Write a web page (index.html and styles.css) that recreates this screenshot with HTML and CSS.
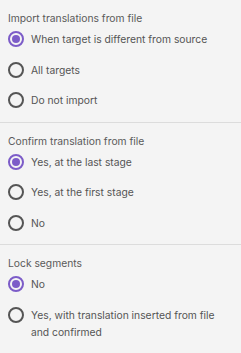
FILE: index.html
```html
<!DOCTYPE html>
<html>
<head>
<meta charset="utf-8">
<link rel="stylesheet" href="styles.css">
</head>
<body>
<div class="panel">
  <section class="group">
    <div class="title">Import translations from file</div>
    <label class="opt"><span class="radio checked"></span><span class="txt">When target is different from source</span></label>
    <label class="opt"><span class="radio"></span><span class="txt">All targets</span></label>
    <label class="opt"><span class="radio"></span><span class="txt">Do not import</span></label>
  </section>
  <section class="group">
    <div class="title">Confirm translation from file</div>
    <label class="opt"><span class="radio checked"></span><span class="txt">Yes, at the last stage</span></label>
    <label class="opt"><span class="radio"></span><span class="txt">Yes, at the first stage</span></label>
    <label class="opt"><span class="radio"></span><span class="txt">No</span></label>
  </section>
  <section class="group last">
    <div class="title">Lock segments</div>
    <label class="opt"><span class="radio checked"></span><span class="txt">No</span></label>
    <label class="opt"><span class="radio"></span><span class="txt">Yes, with translation inserted from file and confirmed</span></label>
  </section>
</div>
</body>
</html>
```
FILE: styles.css
```css
html, body {
  margin: 0;
  padding: 0;
  background: #f4f4f4;
}
body {
  font-family: Inter, "Noto Sans", sans-serif;
  font-size: 10.3px;
  color: #555;
}
.panel {
  display: flex;
  flex-direction: column;
}
.group {
  padding: 12px 8px 6px 8px;
  border-bottom: 1px solid #dcdcdc;
  display: flex;
  flex-direction: column;
}
.group.last {
  border-bottom: none;
}
.title {
  line-height: 12px;
  color: #5a5a5a;
}
.opt {
  display: flex;
  align-items: flex-start;
  gap: 7px;
  padding: 7px 0 6.5px;
  line-height: 17px;
}
.radio {
  flex: none;
  width: 16px;
  height: 16px;
  box-sizing: border-box;
  border: 2px solid #555;
  border-radius: 50%;
  display: flex;
  align-items: center;
  justify-content: center;
}
.radio.checked {
  border-color: #7c5cc8;
}
.radio.checked::after {
  content: "";
  width: 8px;
  height: 8px;
  border-radius: 50%;
  background: #7c5cc8;
}
.txt {
  padding-right: 0;
}
```
